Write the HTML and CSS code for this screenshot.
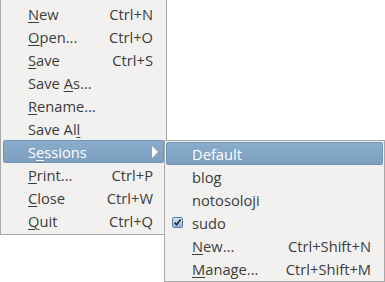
FILE: index.html
```html
<!DOCTYPE html>
<html lang="en">
<head>
  <meta charset="UTF-8" />
  <title>File menu</title>
  <link rel="stylesheet" href="styles.css">
</head>
<body>
  <div class="menu main-menu">
    <div class="item"><span class="label"><u>N</u>ew</span><span class="accel">Ctrl+N</span></div>
    <div class="item"><span class="label"><u>O</u>pen...</span><span class="accel">Ctrl+O</span></div>
    <div class="item"><span class="label"><u>S</u>ave</span><span class="accel">Ctrl+S</span></div>
    <div class="item"><span class="label">Save <u>A</u>s...</span></div>
    <div class="item"><span class="label"><u>R</u>ename...</span></div>
    <div class="item"><span class="label">Save Al<u>l</u></span></div>
    <div class="item active"><span class="label">S<u>e</u>ssions</span><span class="arrow"></span></div>
    <div class="item"><span class="label"><u>P</u>rint...</span><span class="accel">Ctrl+P</span></div>
    <div class="item"><span class="label"><u>C</u>lose</span><span class="accel">Ctrl+W</span></div>
    <div class="item"><span class="label"><u>Q</u>uit</span><span class="accel">Ctrl+Q</span></div>
  </div>

  <div class="menu sub-menu">
    <div class="item active"><span class="label">Default</span></div>
    <div class="item"><span class="label">blog</span></div>
    <div class="item"><span class="label">notosoloji</span></div>
    <div class="item checked">
      <svg class="check" width="11" height="11" viewBox="0 0 11 11">
        <defs>
          <linearGradient id="cb" x1="0" y1="0" x2="0" y2="1">
            <stop offset="0" stop-color="#d5e3f1"/>
            <stop offset="1" stop-color="#93b2d1"/>
          </linearGradient>
        </defs>
        <rect x="0.5" y="0.5" width="10" height="10" rx="1.5" fill="url(#cb)" stroke="#5b7fa4"/>
        <path d="M2.6 5.6 L4.6 7.8 L8.6 2.4" fill="none" stroke="#1f2d3d" stroke-width="1.6"/>
      </svg>
      <span class="label">sudo</span>
    </div>
    <div class="item"><span class="label"><u>N</u>ew...</span><span class="accel">Ctrl+Shift+N</span></div>
    <div class="item"><span class="label"><u>M</u>anage...</span><span class="accel">Ctrl+Shift+M</span></div>
  </div>
</body>
</html>
```

FILE: styles.css
```css
body {
  margin: 0;
  background: #ffffff;
  font-family: 'Open Sans', 'DejaVu Sans', sans-serif;
  font-size: 14.7px;
  color: #3c3c3c;
  position: relative;
  height: 282px;
  overflow: hidden;
}

.menu {
  box-sizing: border-box;
  background: #f2f1f0;
  border: 1px solid #a9a9a9;
}

.main-menu {
  width: 167px;
  margin-top: -1px;
  padding: 2px 2px;
}

.sub-menu {
  position: absolute;
  left: 164px;
  top: 140px;
  width: 221px;
  padding: 1px;
}

.item {
  box-sizing: border-box;
  height: 23px;
  display: flex;
  align-items: center;
  justify-content: space-between;
  border: 1px solid transparent;
  border-radius: 2px;
  white-space: nowrap;
}

.main-menu .item {
  padding: 0 10px 0 24px;
}

.sub-menu .item {
  padding: 0 11px 0 25px;
}

.item.active {
  background: linear-gradient(#8badcd, #7c9ebf);
  border-color: #7192b3;
  color: #ffffff;
}

.item u {
  text-decoration: underline;
  text-underline-offset: 2px;
  text-decoration-thickness: 1px;
}

.sub-menu .item.checked {
  justify-content: flex-start;
  padding-left: 5px;
}

.check {
  margin-right: 9px;
}

.arrow {
  width: 0;
  height: 0;
  border-left: 6px solid #ffffff;
  border-top: 6px solid transparent;
  border-bottom: 6px solid transparent;
  margin-right: -5px;
}
```
